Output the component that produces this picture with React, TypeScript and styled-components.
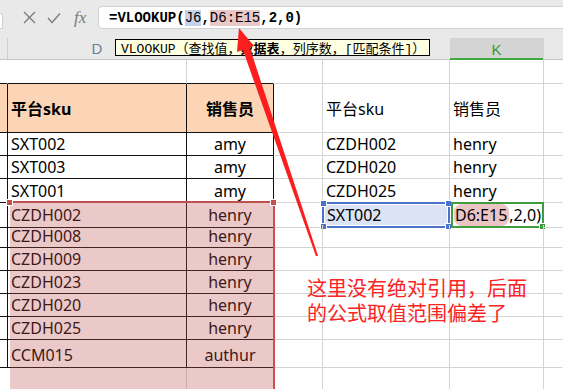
import React from "react"
import styled, { createGlobalStyle } from "styled-components"

const GlobalStyle = createGlobalStyle`
  html, body {
    margin: 0;
    padding: 0;
    background: #ffffff;
  }
`

const COLS = "8px 179px 87px 49px 127px 94px 1fr"
const CELL_FONT = `"Noto Sans", "Noto Sans CJK SC", sans-serif`
const MONO_FONT = `"Liberation Mono", "Noto Sans CJK SC", monospace`

const GRID = "#d4d4d4"
const INK = "#111111"

type Edge = "black" | "grid" | "none"

const edgeColor = (e: Edge) =>
  e === "black" ? INK : e === "grid" ? GRID : "transparent"

const Screen = styled.div`
  position: relative;
  width: 563px;
  height: 389px;
  overflow: hidden;
  background: #ffffff;
  font-family: ${CELL_FONT};
`

const TopBar = styled.div`
  height: 38px;
  box-sizing: border-box;
  padding-top: 6px;
  background: #e9e9e9;
  display: flex;
  align-items: flex-start;
`

const NameStub = styled.div`
  width: 2px;
  height: 14px;
  margin-top: 7px;
  background: #ffffff;
  border: 1px solid #cfcfcf;
  border-left: none;
`

const IconStrip = styled.div`
  display: flex;
  align-items: center;
  gap: 11px;
  height: 23px;
  padding-left: 20px;
  width: 75px;
  color: #7a7a7a;
`

const Fx = styled.span`
  font-family: "Liberation Serif", serif;
  font-style: italic;
  font-size: 17px;
  color: #7a7a7a;
  margin-left: 2px;
`

const FormulaBox = styled.div`
  flex: 1;
  height: 23px;
  margin-right: -10px;
  box-sizing: border-box;
  background: #ffffff;
  border: 1px solid #d2d2d2;
  border-radius: 4px;
  display: flex;
  align-items: center;
  padding-left: 10px;
  font-family: ${MONO_FONT};
  font-weight: bold;
  font-size: 14px;
  color: #000;
  white-space: pre;
`

const Ref = styled.span<{ $tone: "blue" | "red" }>`
  background: ${(p) => (p.$tone === "blue" ? "#c5d2ee" : "#ebc8c8")};
  font-weight: normal;
`

const HeaderRow = styled.div`
  position: relative;
  display: grid;
  grid-template-columns: ${COLS};
  height: 22px;
  box-sizing: border-box;
  background: #e9e9e9;
  border-bottom: 1px solid #c4c4c4;
`

const ColHead = styled.div<{ $active?: boolean; $line?: boolean }>`
  display: flex;
  align-items: center;
  justify-content: center;
  font-family: "Liberation Sans", sans-serif;
  font-size: 15px;
  color: ${(p) => (p.$active ? "#3a9b3a" : "#6d7f9e")};
  background: ${(p) => (p.$active ? "#d4d4d4" : "transparent")};
  border-right: 1px solid ${(p) => (p.$line ? "#cfcfcf" : "transparent")};
  box-shadow: ${(p) => (p.$active ? "inset 0 -2px 0 #3fa83f" : "none")};
  margin-bottom: ${(p) => (p.$active ? "-1px" : "0")};
`

const Tooltip = styled.div`
  position: absolute;
  left: 115px;
  top: 1px;
  height: 17px;
  box-sizing: border-box;
  padding: 0 4px 0 5px;
  display: flex;
  align-items: center;
  background: #ffffe1;
  border: 1px solid #000;
  font-family: ${MONO_FONT};
  font-size: 13px;
  color: #000;
  white-space: pre;

  b {
    font-family: "Noto Sans CJK SC", sans-serif;
    font-weight: bold;
  }
`

const Row = styled.div<{ $h: number }>`
  display: grid;
  grid-template-columns: ${COLS};
  height: ${(p) => p.$h}px;
`

const Cell = styled.div<{
  $right: Edge
  $under: Edge
  $align?: "left" | "center"
  $bg?: string
  $bold?: boolean
  $end?: boolean
}>`
  box-sizing: border-box;
  border-right: 1px solid ${(p) => edgeColor(p.$right)};
  border-bottom: 1px solid ${(p) => edgeColor(p.$under)};
  background: ${(p) => p.$bg || "transparent"};
  display: flex;
  align-items: ${(p) => (p.$end ? "flex-end" : "center")};
  justify-content: ${(p) => (p.$align === "center" ? "center" : "flex-start")};
  padding: 0 3px;
  padding-bottom: ${(p) => (p.$end ? "1px" : "0")};
  font-size: 16px;
  font-weight: ${(p) => (p.$bold ? "bold" : "normal")};
  color: #000;
  white-space: nowrap;
  overflow: visible;
  position: relative;
`

const PickedCell = styled.div`
  position: relative;
  box-sizing: border-box;
  margin: -1px 0 0 -1px;
  border: 2px solid #4a74c9;
  box-shadow: inset 0 0 0 1px #ffffff;
  background: #dce3f4;
  display: flex;
  align-items: center;
  padding: 0 3px;
  font-size: 16px;
  color: #000;
`

const EditCell = styled.div`
  position: relative;
  box-sizing: border-box;
  margin: -1px 0 0 1px;
  border: 2px solid #3f9d3f;
  display: flex;
  align-items: center;
  padding: 0 1px;
  font-size: 16px;
  color: #000;
  white-space: nowrap;
`

const RefChip = styled.span`
  background: #ebc4c4;
  border-radius: 8px;
  padding: 0 2px 0 1px;
`

const Handle = styled.span<{ $c: string; $x: "l" | "r"; $y: "t" | "b" }>`
  position: absolute;
  width: 5px;
  height: 5px;
  background: ${(p) => p.$c};
  border: 1px solid #ffffff;
  ${(p) => (p.$x === "l" ? "left: -4px;" : "right: -4px;")}
  ${(p) => (p.$y === "t" ? "top: -4px;" : "bottom: -4px;")}
`

const RangeMark = styled.div`
  position: absolute;
  left: 10px;
  top: 201px;
  width: 265px;
  height: 200px;
  box-sizing: border-box;
  background: rgba(192, 80, 77, 0.31);
  border-top: 2px solid #c0504d;
  border-right: 2px solid #c8504d;
  pointer-events: none;
`

const Note = styled.div`
  position: absolute;
  left: 307px;
  top: 275px;
  font-family: "Noto Sans CJK SC", sans-serif;
  font-size: 20px;
  line-height: 25px;
  color: #fb2323;
  white-space: nowrap;
`

const Overlay = styled.svg`
  position: absolute;
  left: 0;
  top: 0;
  pointer-events: none;
`

const CrossIcon = () => (
  <svg width="13" height="13" viewBox="0 0 13 13">
    <path d="M1 1 L12 12 M12 1 L1 12" stroke="currentColor" strokeWidth="1.3" fill="none" />
  </svg>
)

const CheckIcon = () => (
  <svg width="14" height="12" viewBox="0 0 14 12">
    <path d="M1 6 L5 10.5 L13 1.5" stroke="currentColor" strokeWidth="1.3" fill="none" />
  </svg>
)

const leftRows: [string, string][] = [
  ["SXT002", "amy"],
  ["SXT003", "amy"],
  ["SXT001", "amy"],
  ["CZDH002", "henry"],
  ["CZDH008", "henry"],
  ["CZDH009", "henry"],
  ["CZDH023", "henry"],
  ["CZDH020", "henry"],
  ["CZDH025", "henry"],
  ["CCM015", "authur"],
]

const rightRows: [string, string][] = [
  ["CZDH002", "henry"],
  ["CZDH020", "henry"],
  ["CZDH025", "henry"],
]

const rowHeights = [23, 23, 24, 22, 23, 23, 23, 23, 23, 28]

export default function App() {
  return (
    <Screen>
      <GlobalStyle />
      <TopBar>
        <NameStub />
        <IconStrip>
          <CrossIcon />
          <CheckIcon />
          <Fx>fx</Fx>
        </IconStrip>
        <FormulaBox>
          =VLOOKUP(<Ref $tone="blue">J6</Ref>,<Ref $tone="red">D6:E15</Ref>,2,0)
        </FormulaBox>
      </TopBar>

      <HeaderRow>
        <ColHead $line />
        <ColHead>D</ColHead>
        <ColHead />
        <ColHead />
        <ColHead />
        <ColHead $active>K</ColHead>
        <ColHead />
        <Tooltip>
          VLOOKUP（查找值，<b>数据表</b>，列序数，[匹配条件]）
        </Tooltip>
      </HeaderRow>

      <Row $h={24}>
        <Cell $right="none" $under="black" />
        <Cell $right="grid" $under="black" />
        <Cell $right="none" $under="black" />
        <Cell $right="grid" $under="grid" />
        <Cell $right="grid" $under="grid" />
        <Cell $right="grid" $under="grid" />
        <Cell $right="none" $under="grid" />
      </Row>

      <Row $h={49}>
        <Cell $right="black" $under="black" $bg="#fbd5b5" />
        <Cell $right="black" $under="black" $bg="#fbd5b5" $bold>
          平台sku
        </Cell>
        <Cell $right="black" $under="black" $bg="#fbd5b5" $bold $align="center">
          销售员
        </Cell>
        <Cell $right="grid" $under="grid" />
        <Cell $right="grid" $under="grid">
          平台sku
        </Cell>
        <Cell $right="grid" $under="grid">
          销售员
        </Cell>
        <Cell $right="none" $under="grid" />
      </Row>

      {leftRows.map(([sku, who], i) => {
        const right = rightRows[i]
        const last = i === leftRows.length - 1
        return (
          <Row $h={rowHeights[i]} key={sku + i}>
            <Cell $right="black" $under="black" />
            <Cell $right="black" $under="black" $end={last}>
              {sku}
            </Cell>
            <Cell $right="black" $under="black" $align="center" $end={last}>
              {who}
            </Cell>
            <Cell $right="grid" $under="grid" />
            {i === 3 ? (
              <>
                <PickedCell>
                  SXT002
                  <Handle $c="#4a74c9" $x="l" $y="t" />
                  <Handle $c="#4a74c9" $x="r" $y="t" />
                  <Handle $c="#4a74c9" $x="l" $y="b" />
                  <Handle $c="#4a74c9" $x="r" $y="b" />
                </PickedCell>
                <EditCell>
                  <RefChip>D6:E15</RefChip>,2,0)
                  <Handle $c="#3f9d3f" $x="r" $y="b" />
                </EditCell>
              </>
            ) : (
              <>
                <Cell $right="grid" $under="grid">
                  {right ? right[0] : ""}
                </Cell>
                <Cell $right="grid" $under="grid">
                  {right ? right[1] : ""}
                </Cell>
              </>
            )}
            <Cell $right="none" $under="grid" />
          </Row>
        )
      })}

      <Row $h={24}>
        <Cell $right="none" $under="none" />
        <Cell $right="grid" $under="none" />
        <Cell $right="none" $under="none" />
        <Cell $right="grid" $under="grid" />
        <Cell $right="grid" $under="grid" />
        <Cell $right="grid" $under="grid" />
        <Cell $right="none" $under="grid" />
      </Row>

      <RangeMark>
        <Handle $c="#c0504d" $x="l" $y="t" />
        <Handle $c="#c0504d" $x="r" $y="t" />
      </RangeMark>

      <Note>
        这里没有绝对引用，后面
        <br />
        的公式取值范围偏差了
      </Note>

      <Overlay width="563" height="389" viewBox="0 0 563 389">
        <polygon points="239,28 254,46 237,52" fill="#fb1e1e" />
        <polygon points="241.7,46.5 248.6,44 318,255.7 316,256.3" fill="#fb1e1e" />
      </Overlay>
    </Screen>
  )
}
